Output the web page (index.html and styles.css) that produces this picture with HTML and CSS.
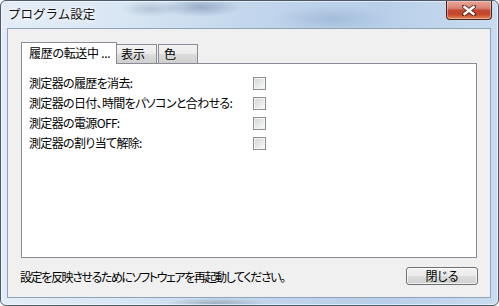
FILE: index.html
```html
<!DOCTYPE html>
<html lang="ja">
<head>
<meta charset="utf-8">
<title>プログラム設定</title>
<link rel="stylesheet" href="styles.css">
</head>
<body>
<div class="window">
  <div class="titlebar">
    <div class="title">プログラム設定</div>
    <div class="close">
      <svg width="14" height="11" viewBox="0 0 14 11">
        <path d="M2 1.5 L12 9.5 M12 1.5 L2 9.5" stroke="#3a1a14" stroke-width="4.2" stroke-linecap="square" fill="none" opacity="0.75"/>
        <path d="M2.5 2 L11.5 9 M11.5 2 L2.5 9" stroke="#ffffff" stroke-width="2.4" stroke-linecap="square" fill="none"/>
      </svg>
    </div>
  </div>
  <div class="client">
    <div class="tabs">
      <div class="tab selected">履歴の転送中 ...</div>
      <div class="tab t2">表示</div>
      <div class="tab t3">色</div>
    </div>
    <div class="panel">
      <div class="rows">
        <div class="label">測定器の履歴を消去:</div><div class="cb"></div>
        <div class="label">測定器の日付、時間をパソコンと合わせる:</div><div class="cb"></div>
        <div class="label">測定器の電源OFF:</div><div class="cb"></div>
        <div class="label">測定器の割り当て解除:</div><div class="cb"></div>
      </div>
    </div>
    <div class="footer">
      <div class="note">設定を反映させるためにソフトウェアを再起動してください。</div>
      <div class="button">閉じる</div>
    </div>
  </div>
</div>
</body>
</html>
```

FILE: styles.css
```css
html, body {
  margin: 0;
  padding: 0;
  background: #ffffff;
}
body {
  width: 499px;
  height: 306px;
  overflow: hidden;
  font-family: "Noto Sans CJK JP", "Noto Sans", sans-serif;
  font-size: 12px;
  color: #000;
}
.window {
  box-sizing: border-box;
  width: 499px;
  height: 306px;
  border: 1px solid #4b5968;
  border-radius: 6px;
  padding: 0 7px 7px 6px;
  display: flex;
  flex-direction: column;
  box-shadow: inset 0 0 0 1px rgba(255,255,255,0.55);
  background:
    radial-gradient(ellipse 40px 10px at 200px 6px, rgba(90,115,150,0.45), rgba(90,115,150,0)),
    radial-gradient(ellipse 30px 8px at 150px 8px, rgba(120,140,170,0.35), rgba(120,140,170,0)),
    radial-gradient(ellipse 60px 14px at 330px 18px, rgba(120,150,190,0.35), rgba(120,150,190,0)),
    radial-gradient(ellipse 50px 5px at 215px 302px, rgba(110,120,135,0.45), rgba(110,120,135,0)),
    linear-gradient(90deg, #e4edf7 0px, #d9e6f3 120px, #c2d6ec 250px, #b8cfe9 380px, #c9dcf0 499px);
}
.titlebar {
  height: 27px;
  display: flex;
  justify-content: space-between;
  align-items: flex-start;
  flex: none;
}
.title {
  padding: 5px 0 0 1px;
  font-size: 12.5px;
  line-height: 16px;
  color: #111;
  text-shadow: 0 0 6px rgba(255,255,255,0.95), 0 0 3px rgba(255,255,255,0.95);
}
.close {
  box-sizing: border-box;
  width: 46px;
  height: 19px;
  margin-right: -1px;
  border: 1px solid #4a2520;
  border-top: none;
  border-radius: 0 0 4px 4px;
  background: linear-gradient(#e9a797 0%, #d98373 40%, #c24a33 52%, #c5472c 75%, #e58a5a 100%);
  box-shadow: inset 0 0 0 1px rgba(255,220,210,0.45);
  display: flex;
  align-items: center;
  justify-content: center;
}
.close svg { display: block; }
.client {
  flex: 1;
  background: #f0f0f0;
  border: 1px solid #8fa3b8;
  padding: 13px 13px 0 13px;
  display: flex;
  flex-direction: column;
}
.tabs {
  display: flex;
  align-items: flex-end;
  height: 21px;
  position: relative;
  z-index: 1;
}
.tab {
  box-sizing: border-box;
  height: 19px;
  border: 1px solid #898c95;
  border-bottom: none;
  background: linear-gradient(#f3f3f3 0%, #ebebeb 50%, #dddddd 51%, #cfcfcf 100%);
  line-height: 17px;
  white-space: nowrap;
  font-feature-settings: "palt";
}
.tab.selected {
  height: 22px;
  width: 96px;
  background: #ffffff;
  padding-left: 7px;
  line-height: 19px;
  margin-bottom: -1px;
  letter-spacing: -0.3px;
}
.tab.t2 {
  width: 41px;
  margin-left: -1px;
  padding-left: 4px;
}
.tab.t3 {
  width: 40px;
  margin-left: 1px;
  padding-left: 5px;
}
.panel {
  box-sizing: border-box;
  height: 195px;
  background: #ffffff;
  border: 1px solid #898c95;
  padding: 9px 0 0 7px;
}
.rows {
  display: grid;
  grid-template-columns: 224px 13px;
  grid-auto-rows: 20px;
  align-items: center;
}
.label {
  font-feature-settings: "palt";
  line-height: 20px;
  white-space: nowrap;
  letter-spacing: -0.65px;
}
.cb {
  box-sizing: border-box;
  width: 13px;
  height: 13px;
  border: 1px solid #8e8f8f;
  background: linear-gradient(135deg, #cfd1d4 0%, #e6e7e8 50%, #fbfbfb 100%);
  box-shadow: inset 0 0 0 1px #f4f4f4;
}
.footer {
  display: flex;
  justify-content: space-between;
  align-items: center;
  margin-top: 9px;
  margin-left: -1px;
  margin-right: -1px;
}
.note {
  font-feature-settings: "palt";
  white-space: nowrap;
  letter-spacing: -1.4px;
}
.button {
  box-sizing: border-box;
  width: 72px;
  height: 18px;
  border: 1px solid #707070;
  border-radius: 3px;
  background: linear-gradient(#f2f2f2 0%, #ebebeb 50%, #dddddd 51%, #cfcfcf 100%);
  box-shadow: inset 0 0 0 1px rgba(255,255,255,0.7);
  text-align: center;
  line-height: 16px;
  font-feature-settings: "palt";
}
```
